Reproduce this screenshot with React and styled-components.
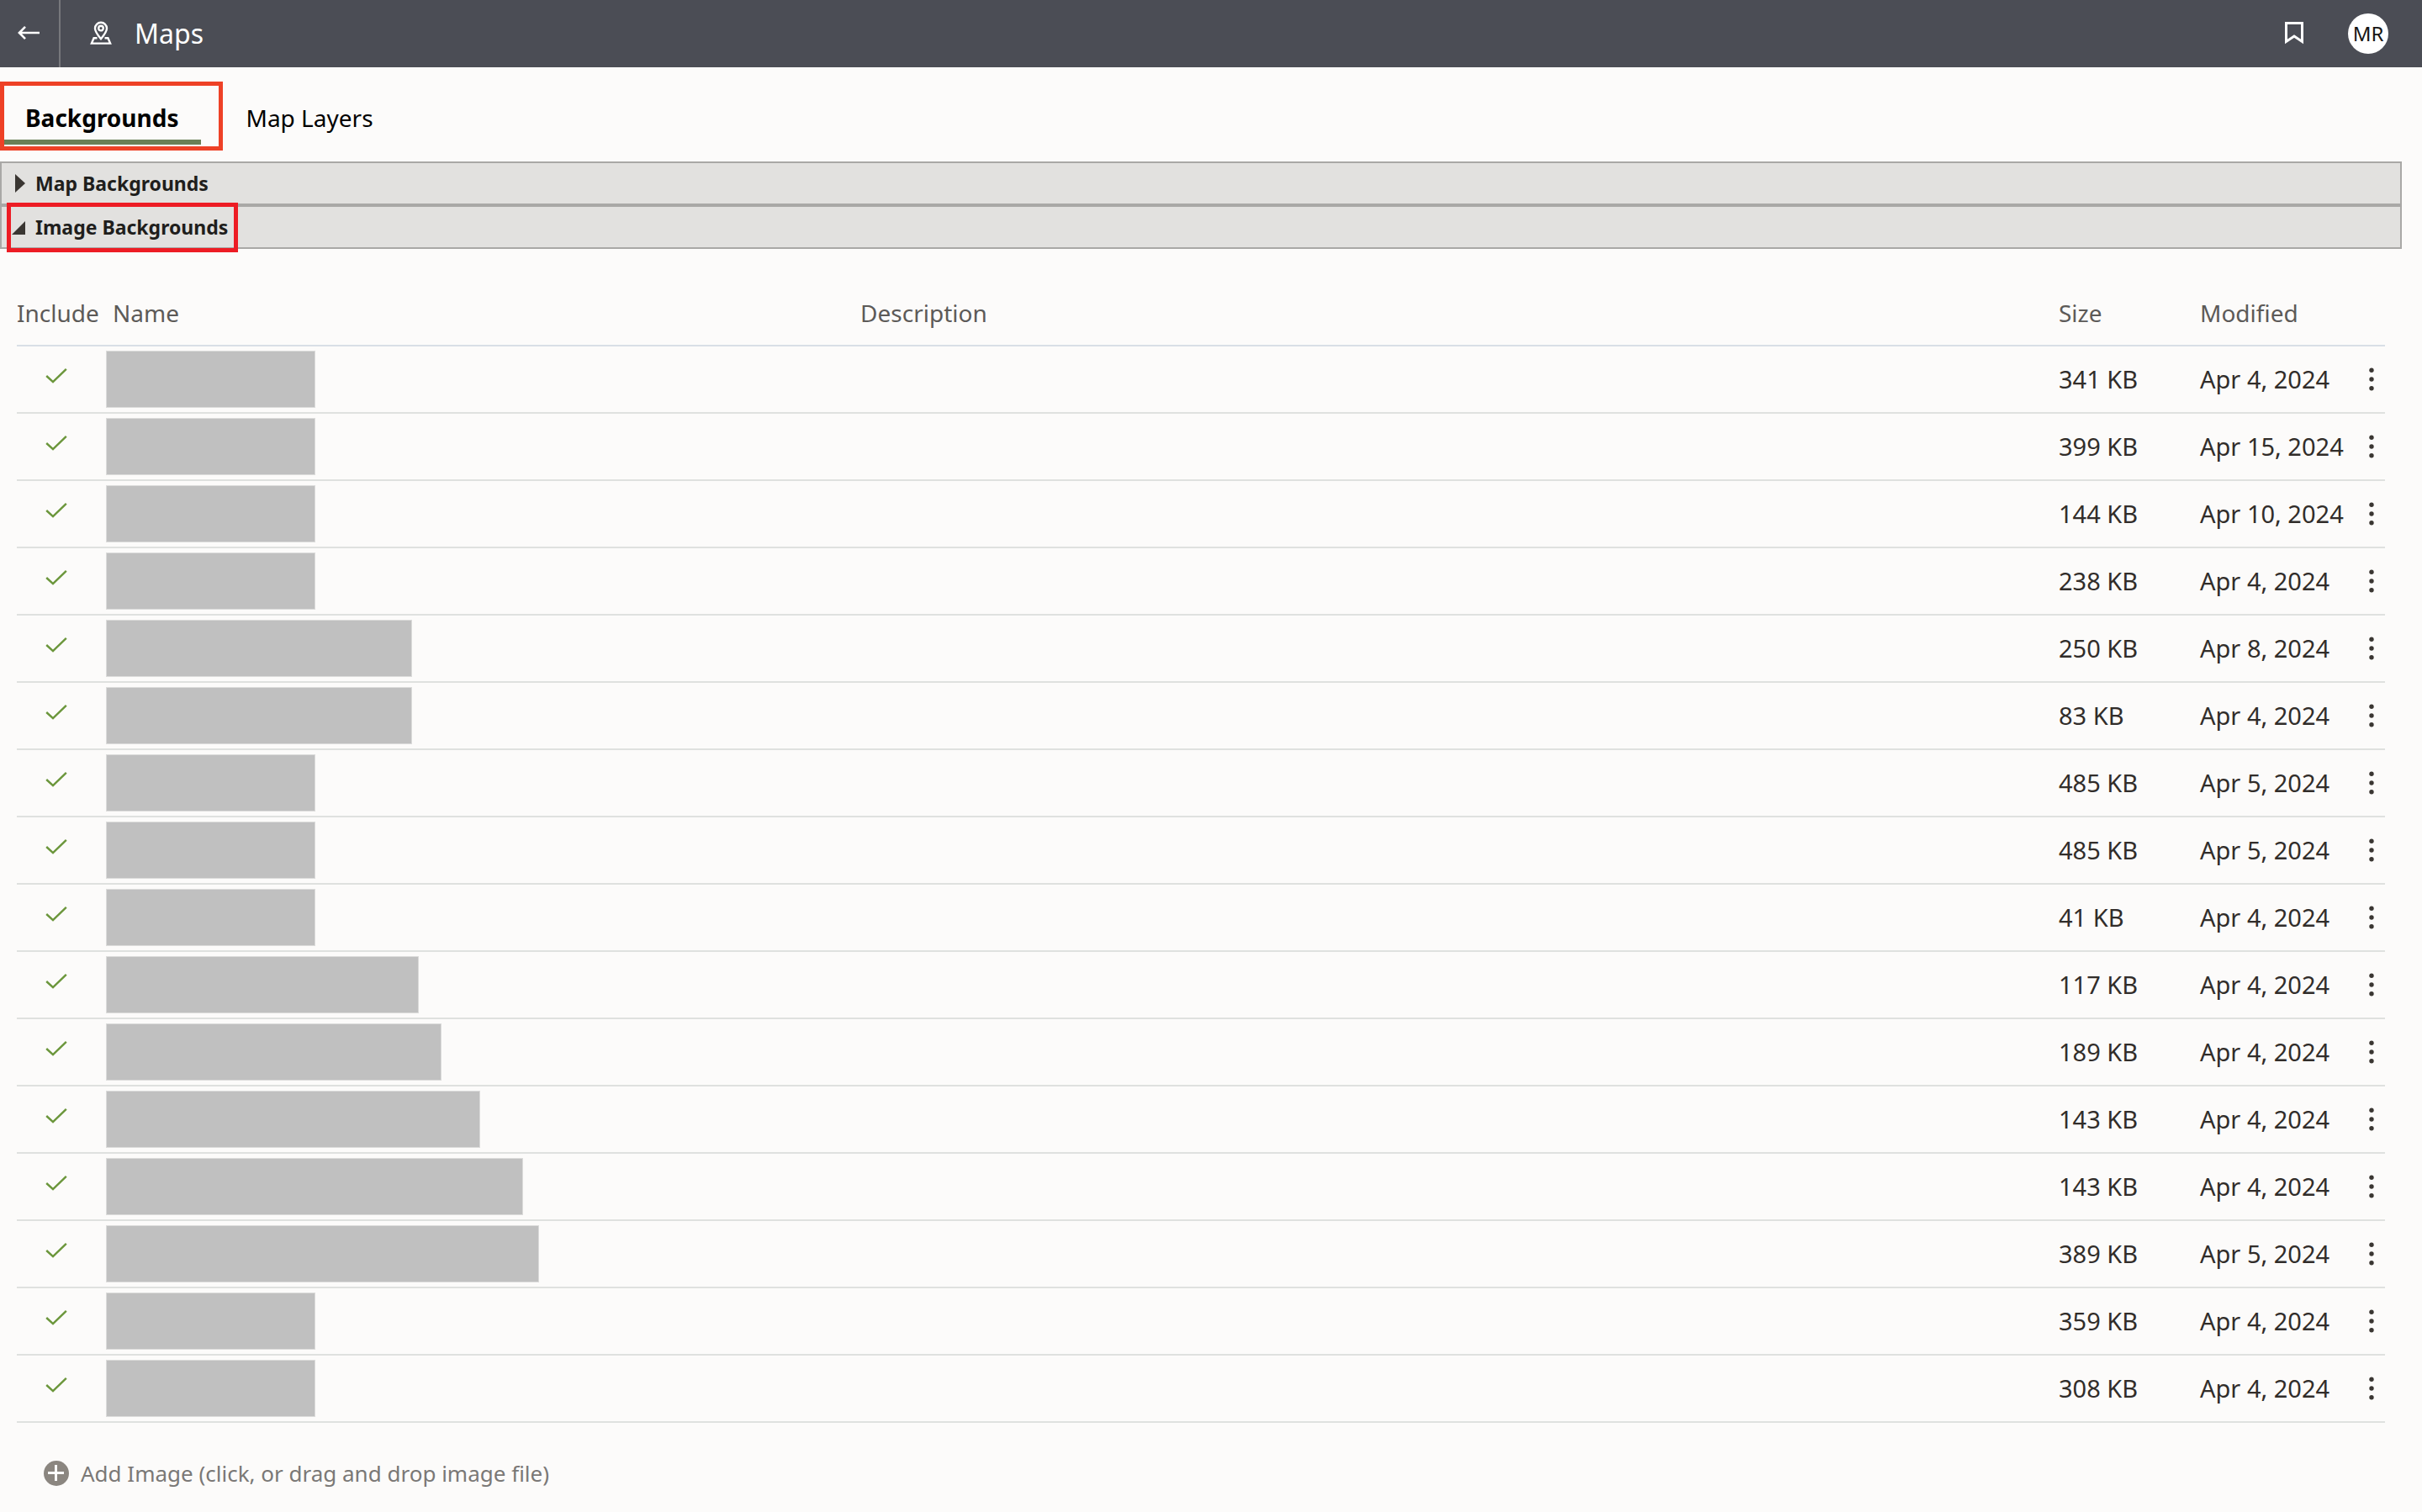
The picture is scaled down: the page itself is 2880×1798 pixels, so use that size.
import React, { useState } from "react";
import styled, { createGlobalStyle, css } from "styled-components";

const GlobalStyle = createGlobalStyle`
  *, *::before, *::after { box-sizing: border-box; }
  body {
    margin: 0;
    background: #fcfbfa;
    color: #312d2a;
    font-family: "Noto Sans", "Open Sans", sans-serif;
    font-size: 28px;
    line-height: 40px;
  }
  button {
    margin: 0;
    padding: 0;
    border: 0;
    background: none;
    color: inherit;
    font: inherit;
    cursor: pointer;
  }
`;

const TopBar = styled.header`
  display: flex;
  align-items: center;
  height: 80px;
  padding-right: 40px;
  background: #4b4d55;
  color: #fff;
`;

const BackButton = styled.button`
  display: grid;
  place-items: center;
  width: 72px;
  height: 80px;
  border-right: 2px solid #77787c;
`;

const Title = styled.h1`
  display: flex;
  align-items: center;
  gap: 26px;
  flex: 1;
  margin: 0;
  padding-left: 34px;
  font-size: 32px;
  font-weight: 400;
`;

const BarActions = styled.div`
  display: flex;
  align-items: center;
  gap: 48px;
`;

const BarButton = styled.button`
  display: grid;
  place-items: center;
  width: 32px;
  height: 48px;
`;

const Avatar = styled.button`
  width: 48px;
  height: 48px;
  border-radius: 50%;
  background: #fff;
  color: #161513;
  font-size: 24px;
`;

const TabList = styled.nav`
  display: flex;
  gap: 24px;
  height: 112px;
  padding-top: 40px;
`;

const Tab = styled.button`
  position: relative;
  height: 52px;
  padding: 0 26px 12px 30px;
  border-bottom: 6px solid transparent;
  color: #000;
  ${(p) =>
    p.$selected &&
    css`
      border-bottom-color: #6b7f56;
      font-weight: 700;
    `}
`;

const Callout = styled.span`
  position: absolute;
  top: ${(p) => p.$top};
  right: ${(p) => p.$right};
  bottom: ${(p) => p.$bottom};
  left: ${(p) => p.$left};
  border: 5px solid ${(p) => p.$color};
  pointer-events: none;
`;

const Main = styled.main`
  padding-right: 24px;
`;

const SectionHeader = styled.h2`
  display: flex;
  height: 52px;
  margin: 0;
  border: 2px solid #a9a8a6;
  background: #e2e1df;
  font-size: 23px;
`;

const SectionToggle = styled.button`
  position: relative;
  display: flex;
  align-items: center;
  gap: 11px;
  padding: 0 12px 0 11px;
  color: #201e1c;
  font-weight: 700;
`;

const Panel = styled.section`
  padding: 56px 20px 0;
`;

const Table = styled.table`
  width: 100%;
  table-layout: fixed;
  border-collapse: separate;
  border-spacing: 0;
`;

const Col = styled.col`
  width: ${(p) => p.$width};
`;

const HeadCell = styled.th`
  padding: 0 0 18px ${(p) => p.$inset || "0"};
  border-bottom: 2px solid #d9dfe6;
  color: #5c5a58;
  font-weight: 400;
  text-align: left;
`;

const Cell = styled.td`
  height: 80px;
  padding: 0;
  border-bottom: 2px solid #dfe1df;
  font-size: 29px;
  white-space: nowrap;
`;

const IncludeCell = styled(Cell)`
  padding: 0 8px 8px 0;
`;

const NameCell = styled(Cell)`
  padding-left: 4px;
`;

const NameBlock = styled.div`
  height: 68px;
  width: ${(p) => p.$width}px;
  border: 1px solid #dcdcdb;
  background: #c0c0c0;
`;

const IncludeLabel = styled.label`
  display: grid;
  place-items: center;
  input, svg { grid-area: 1 / 1; }
  input {
    width: 28px;
    height: 28px;
    margin: 0;
    appearance: none;
    cursor: pointer;
  }
  svg { display: none; pointer-events: none; }
  input:checked + svg { display: block; }
`;

const MenuButton = styled.button`
  display: grid;
  place-items: center;
  width: 32px;
  height: 48px;
`;

const AddButton = styled.button`
  display: flex;
  align-items: center;
  gap: 14px;
  margin: 40px 0 24px;
  padding-left: 32px;
  color: #7a7876;
  font-size: 26px;
`;

const images = [
  [249, "341 KB", "Apr 4, 2024"],
  [249, "399 KB", "Apr 15, 2024"],
  [249, "144 KB", "Apr 10, 2024"],
  [249, "238 KB", "Apr 4, 2024"],
  [364, "250 KB", "Apr 8, 2024"],
  [364, "83 KB", "Apr 4, 2024"],
  [249, "485 KB", "Apr 5, 2024"],
  [249, "485 KB", "Apr 5, 2024"],
  [249, "41 KB", "Apr 4, 2024"],
  [372, "117 KB", "Apr 4, 2024"],
  [399, "189 KB", "Apr 4, 2024"],
  [445, "143 KB", "Apr 4, 2024"],
  [496, "143 KB", "Apr 4, 2024"],
  [515, "389 KB", "Apr 5, 2024"],
  [249, "359 KB", "Apr 4, 2024"],
  [249, "308 KB", "Apr 4, 2024"],
];

const BackIcon = () => (
  <svg width="28" height="20" viewBox="0 0 28 20" fill="none" stroke="#fff" strokeWidth="2.6">
    <path d="M26 9H2.500M9 1.800 1.900 9 9 16.200" />
  </svg>
);

const MapPinIcon = () => (
  <svg width="28" height="30" viewBox="0 0 28 30" fill="none" stroke="#fff" strokeWidth="2.400">
    <path d="M14 21.200C10 16.500 7 12.600 7 8.800a7 7 0 0 1 14 0C21 12.600 18 16.500 14 21.200z" />
    <circle cx="14" cy="8.600" r="2.800" />
    <path d="M9.500 20.200H5.600L2.900 26.600h22.200L22.400 20.200H18.500" />
  </svg>
);

const BookmarkIcon = () => (
  <svg width="22" height="28" viewBox="0 0 22 28" fill="none" stroke="#fff" strokeWidth="3">
    <path d="M1.500 1.500h19v22L11 17l-9.500 6.500z" />
  </svg>
);

const CheckIcon = () => (
  <svg width="26" height="20" viewBox="0 0 26 20" fill="none" stroke="#6b963b" strokeWidth="2.400">
    <path d="M1.200 10 9 17.200 24.800 1.800" />
  </svg>
);

const DotsIcon = () => (
  <svg width="8" height="28" viewBox="0 0 8 28" fill="#3a3632">
    <circle cx="4" cy="3.300" r="2.700" />
    <circle cx="4" cy="14" r="2.700" />
    <circle cx="4" cy="24.700" r="2.700" />
  </svg>
);

const PlusIcon = () => (
  <svg width="30" height="30" viewBox="0 0 30 30">
    <circle cx="15" cy="15" r="15" fill="#8b8680" />
    <path d="M14.500 5v19M5 14.500h19" stroke="#fff" strokeWidth="3" />
  </svg>
);

const Disclosure = ({ open }) => (
  <svg width="18" height="24" viewBox="0 0 18 24" fill="#3a3632">
    <path d={open ? "M17 5v16H1z" : "M5 1l12 11L5 23z"} />
  </svg>
);

function ImageRow({ width, size, modified, index }) {
  const [included, setIncluded] = useState(true);
  return (
    <tr>
      <IncludeCell>
        <IncludeLabel>
          <input
            type="checkbox"
            aria-label={`Include image ${index}`}
            checked={included}
            onChange={(e) => setIncluded(e.target.checked)}
          />
          <CheckIcon />
        </IncludeLabel>
      </IncludeCell>
      <NameCell>
        <NameBlock $width={width} />
      </NameCell>
      <Cell />
      <Cell>{size}</Cell>
      <Cell>{modified}</Cell>
      <Cell>
        <MenuButton type="button" aria-label="Options">
          <DotsIcon />
        </MenuButton>
      </Cell>
    </tr>
  );
}

export default function App() {
  return (
    <>
      <GlobalStyle />
      <TopBar>
        <BackButton type="button" aria-label="Back">
          <BackIcon />
        </BackButton>
        <Title>
          <MapPinIcon />
          Maps
        </Title>
        <BarActions>
          <BarButton type="button" aria-label="Bookmark">
            <BookmarkIcon />
          </BarButton>
          <Avatar type="button">MR</Avatar>
        </BarActions>
      </TopBar>
      <TabList>
        <Tab type="button" $selected>
          Backgrounds
          <Callout $color="#ee4126" $top="-23px" $right="-26px" $bottom="-13px" $left="0" />
        </Tab>
        <Tab type="button">Map Layers</Tab>
      </TabList>
      <Main>
        <SectionHeader>
          <SectionToggle type="button" aria-expanded="false">
            <Disclosure />
            Map Backgrounds
          </SectionToggle>
        </SectionHeader>
        <SectionHeader>
          <SectionToggle type="button" aria-expanded="true">
            <Disclosure open />
            Image Backgrounds
            <Callout $color="#ed1c24" $top="-5px" $right="0" $bottom="-6px" $left="6px" />
          </SectionToggle>
        </SectionHeader>
        <Panel>
          <Table>
            <colgroup>
              <Col $width="102px" />
              <Col $width="32%" />
              <Col />
              <Col $width="168px" />
              <Col $width="188px" />
              <Col $width="32px" />
            </colgroup>
            <thead>
              <tr>
                <HeadCell scope="col">Include</HeadCell>
                <HeadCell scope="col" $inset="12px">Name</HeadCell>
                <HeadCell scope="col">Description</HeadCell>
                <HeadCell scope="col">Size</HeadCell>
                <HeadCell scope="col">Modified</HeadCell>
                <HeadCell as="td" />
              </tr>
            </thead>
            <tbody>
              {images.map(([width, size, modified], i) => (
                <ImageRow key={i} index={i + 1} width={width} size={size} modified={modified} />
              ))}
            </tbody>
          </Table>
          <AddButton type="button">
            <PlusIcon />
            Add Image (click, or drag and drop image file)
          </AddButton>
        </Panel>
      </Main>
    </>
  );
}
